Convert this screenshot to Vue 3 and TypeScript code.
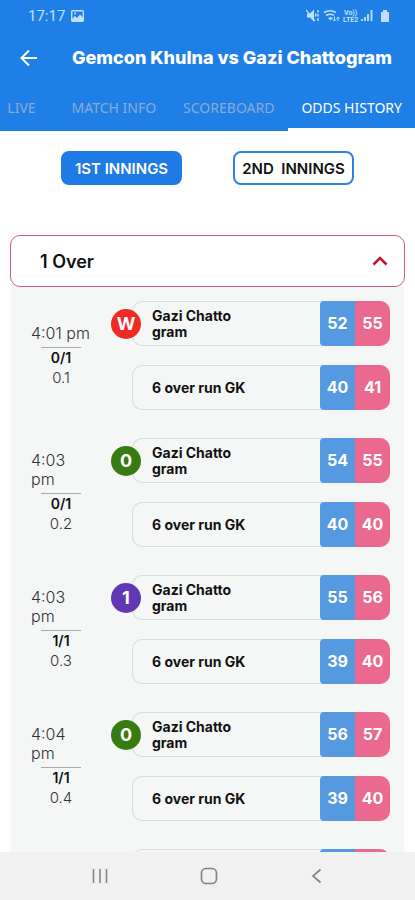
<script setup lang="ts">
import { ref } from 'vue'

interface Market {
  lines: string[]
  back: number
  lay: number
}

interface Ball {
  time: string[]
  score: string
  over: string
  result: string
  kind: 'wicket' | 'dot' | 'run'
  markets: Market[]
}

const tabs = ['LIVE', 'MATCH INFO', 'SCOREBOARD', 'ODDS HISTORY']
const activeTab = ref('ODDS HISTORY')
const innings = ref(1)
const open = ref(true)

const team = ['Gazi Chatto', 'gram']
const session = ['6 over run GK']

const balls: Ball[] = [
  { time: ['4:01 pm'], score: '0/1', over: '0.1', result: 'W', kind: 'wicket', markets: [{ lines: team, back: 52, lay: 55 }, { lines: session, back: 40, lay: 41 }] },
  { time: ['4:03', 'pm'], score: '0/1', over: '0.2', result: '0', kind: 'dot', markets: [{ lines: team, back: 54, lay: 55 }, { lines: session, back: 40, lay: 40 }] },
  { time: ['4:03', 'pm'], score: '1/1', over: '0.3', result: '1', kind: 'run', markets: [{ lines: team, back: 55, lay: 56 }, { lines: session, back: 39, lay: 40 }] },
  { time: ['4:04', 'pm'], score: '1/1', over: '0.4', result: '0', kind: 'dot', markets: [{ lines: team, back: 56, lay: 57 }, { lines: session, back: 39, lay: 40 }] },
]
</script>

<template>
  <div class="screen">
    <header class="top">
      <div class="status">
        <span class="clock">17:17</span>
        <svg class="photo" width="13" height="12" viewBox="0 0 13 12" aria-hidden="true">
          <rect x="0.7" y="0.7" width="11.6" height="10.6" rx="1" fill="none" stroke="currentColor" stroke-width="1.4" />
          <path d="M1 9 4 6l2 2 3-3.500 3 3V11H1z" fill="currentColor" />
          <circle cx="4" cy="3.500" r="1" fill="currentColor" />
        </svg>
        <svg class="signals" width="83" height="14" viewBox="0 0 83 14" aria-hidden="true">
          <path d="M1 4.500h3l4-4v12L4 8.500H1z" fill="currentColor" />
          <path d="M0 1l9 11" stroke="currentColor" stroke-width="1.200" />
          <path d="M9.800 4.500v3M12 1v2.500M12 5v2.500M12 9v3" stroke="currentColor" stroke-width="1.500" />
          <g fill="none" stroke="currentColor" stroke-width="1.500">
            <path d="M18 3.500q6-3.500 12 0M20 6.500q4.500-2.500 8 0" />
          </g>
          <path d="M22 9q2.500-1.500 5 0l-2.500 2.500z" fill="currentColor" />
          <path d="M28.500 7.500v4.500M27 10.500l1.500 1.500 1.500-1.500M32 12V8M30.500 9.500 32 8l1.500 1.500" fill="none" stroke="currentColor" stroke-width="1" />
          <g fill="currentColor" font-family="Roboto, sans-serif" font-weight="700" font-size="7">
            <text x="38" y="6">Vo))</text>
            <text x="37" y="12.500">LTE2</text>
          </g>
          <path d="M56 12v-2M59 12V8M62 12V5M65.500 12V1" stroke="currentColor" stroke-width="1.800" />
          <path d="M75 3h2V1h4v2h2v10h-8z" fill="currentColor" />
        </svg>
      </div>

      <div class="bar">
        <button class="back" type="button" aria-label="Back">
          <svg width="18" height="18" viewBox="0 0 18 18" aria-hidden="true">
            <path d="M17 9H2M9 1.500 1.500 9 9 16.500" fill="none" stroke="currentColor" stroke-width="2" />
          </svg>
        </button>
        <h1>Gemcon Khulna vs Gazi Chattogram</h1>
      </div>

      <nav class="tabs">
        <a
          v-for="tab in tabs"
          :key="tab"
          href="#"
          class="tab"
          :class="{ active: tab === activeTab }"
          @click.prevent="activeTab = tab"
        >{{ tab }}</a>
      </nav>
    </header>

    <main class="content">
      <div class="innings">
        <button type="button" :class="{ chosen: innings === 1 }" @click="innings = 1">1ST INNINGS</button>
        <button type="button" :class="{ chosen: innings === 2 }" @click="innings = 2">2ND&nbsp; INNINGS</button>
      </div>

      <button class="over" type="button" :aria-expanded="open" @click="open = !open">
        <span>1 Over</span>
        <svg :class="{ closed: !open }" width="16" height="10" viewBox="0 0 16 10" aria-hidden="true">
          <path d="M1.500 8.500 8 2l6.500 6.500" fill="none" stroke="currentColor" stroke-width="2.600" />
        </svg>
      </button>

      <section v-if="open" class="balls">
        <article v-for="ball in balls" :key="ball.over" class="ball">
          <div class="meta">
            <div class="time"><div v-for="part in ball.time" :key="part">{{ part }}</div></div>
            <div class="score">{{ ball.score }}</div>
            <div class="number">{{ ball.over }}</div>
          </div>
          <div class="markets">
            <div v-for="(market, i) in ball.markets" :key="i" class="market">
              <span v-if="i === 0" class="badge" :class="ball.kind">{{ ball.result }}</span>
              <div class="name"><div v-for="line in market.lines" :key="line">{{ line }}</div></div>
              <div class="rate blue">{{ market.back }}</div>
              <div class="rate pink">{{ market.lay }}</div>
            </div>
          </div>
        </article>
        <div class="ball upcoming">
          <div class="market">
            <div class="name"></div>
            <div class="rate blue"></div>
            <div class="rate pink"></div>
          </div>
        </div>
      </section>
    </main>

    <footer class="system">
      <button type="button" aria-label="Recent apps">
        <svg width="16" height="16" viewBox="0 0 16 16" aria-hidden="true">
          <path d="M1.500 1v14M8 1v14M14.500 1v14" stroke="currentColor" stroke-width="1.600" />
        </svg>
      </button>
      <button type="button" aria-label="Home">
        <svg width="18" height="18" viewBox="0 0 18 18" aria-hidden="true">
          <rect x="1.500" y="1.500" width="15" height="15" rx="4.500" fill="none" stroke="currentColor" stroke-width="1.700" />
        </svg>
      </button>
      <button type="button" aria-label="Back">
        <svg width="16" height="16" viewBox="0 0 16 16" aria-hidden="true">
          <path d="M11.500 1.500 4 8l7.500 6.500" fill="none" stroke="currentColor" stroke-width="1.700" />
        </svg>
      </button>
    </footer>
  </div>
</template>

<style>
body {
  background: #fefefe;
}
</style>

<style scoped>
.screen {
  display: flex;
  flex-direction: column;
  height: 100vh;
  overflow: hidden;
  font-family: Inter, "Liberation Sans", sans-serif;
  color: #111;
}

button {
  font: inherit;
  color: inherit;
  border: 0;
  background: none;
  padding: 0;
  cursor: pointer;
}

svg {
  display: block;
}

.top {
  flex: none;
  background: #1e80e6;
  color: #fff;
}

.status {
  display: flex;
  align-items: center;
  height: 32px;
  padding: 0 26px 0 28px;
  color: #c2e0fb;
}

.clock {
  font: 15px/20px Roboto, sans-serif;
}

.photo {
  margin-left: 6px;
}

.signals {
  margin-left: auto;
}

.bar {
  display: flex;
  align-items: center;
  gap: 34px;
  height: 52px;
  padding: 0 16px 0 20px;
}

h1 {
  margin: 0;
  font-size: 18px;
  line-height: 24px;
  font-weight: 800;
  white-space: nowrap;
}

.tabs {
  display: flex;
  justify-content: flex-end;
  gap: 1px;
  height: 47px;
  overflow: hidden;
}

.tab {
  flex: none;
  box-sizing: border-box;
  min-width: 72px;
  padding: 0 13px;
  border-bottom: 3px solid transparent;
  font: 14px/47px "Noto Sans", sans-serif;
  text-align: center;
  text-decoration: none;
  color: #8aacd3;
}

.tab.active {
  color: #fff;
  border-color: #fff;
}

.content {
  flex: 1;
  min-height: 0;
  overflow-y: auto;
  scrollbar-width: none;
  padding: 20px 10px 0;
}

.innings {
  display: flex;
  justify-content: space-between;
  padding: 0 51px;
}

.innings button {
  width: 121px;
  height: 34px;
  border: 2px solid #2f83e0;
  border-radius: 8px;
  background: #fff;
  font-size: 15px;
  font-weight: 600;
  white-space: nowrap;
}

.innings .chosen {
  background: #1e7ae4;
  border-color: #1e7ae4;
  color: #fff;
}

.over {
  display: flex;
  align-items: center;
  justify-content: space-between;
  width: 100%;
  height: 52px;
  margin-top: 50px;
  padding: 0 16px 0 29px;
  border: 1px solid #c9606f;
  border-radius: 10px;
  background: #fff;
  font-size: 18px;
  font-weight: 600;
}

.over svg {
  color: #c4152e;
}

.over .closed {
  transform: rotate(180deg);
}

.balls {
  display: flex;
  flex-direction: column;
  gap: 28px;
  margin: 0 1px;
  padding: 14px 14px 0 20px;
  background: #f5f6f6;
}

.ball {
  display: flex;
  gap: 41px;
}

.upcoming {
  padding-left: 101px;
}

.meta {
  flex: none;
  display: flex;
  flex-direction: column;
  align-items: center;
  justify-content: center;
  width: 60px;
  color: #333;
  font-size: 15px;
  line-height: 20px;
  text-align: center;
}

.time {
  width: 100%;
  font-size: 16px;
  font-weight: 300;
  line-height: 19px;
  text-align: left;
  white-space: nowrap;
}

.score {
  width: 40px;
  margin-top: 4px;
  border-top: 1px solid #aaa;
  font-size: 14px;
  font-weight: 600;
  color: #111;
}

.number {
  font-weight: 300;
}

.markets {
  flex: 1;
  display: flex;
  flex-direction: column;
  gap: 19px;
}

.market {
  position: relative;
  flex: none;
  display: flex;
  box-sizing: border-box;
  height: 45px;
  border: 1px solid #d3dfdf;
  border-right: 0;
  border-radius: 10px;
}

.upcoming .market {
  flex: 1;
}

.name {
  flex: 1;
  align-self: center;
  padding-left: 19px;
  font-size: 14px;
  line-height: 16px;
  font-weight: 700;
}

.badge {
  position: absolute;
  left: -22px;
  top: 7px;
  width: 30px;
  height: 30px;
  border-radius: 50%;
  color: #fff;
  font-size: 18px;
  line-height: 30px;
  font-weight: 700;
  text-align: center;
}

.wicket {
  background: #ee2c24;
}

.dot {
  background: #377b13;
}

.run {
  background: #6038b4;
}

.rate {
  width: 35px;
  margin: -1px 0;
  color: #fff;
  font-size: 16px;
  line-height: 45px;
  font-weight: 700;
  text-align: center;
}

.blue {
  background: #5599e0;
  border-radius: 4px 0 0 4px;
}

.pink {
  background: #eb698e;
  border-radius: 0 10px 10px 0;
}

.system {
  flex: none;
  display: flex;
  align-items: center;
  justify-content: space-between;
  height: 48px;
  padding: 0 90px 0 92px;
  background: #f1f1f1;
  color: #858585;
}
</style>
